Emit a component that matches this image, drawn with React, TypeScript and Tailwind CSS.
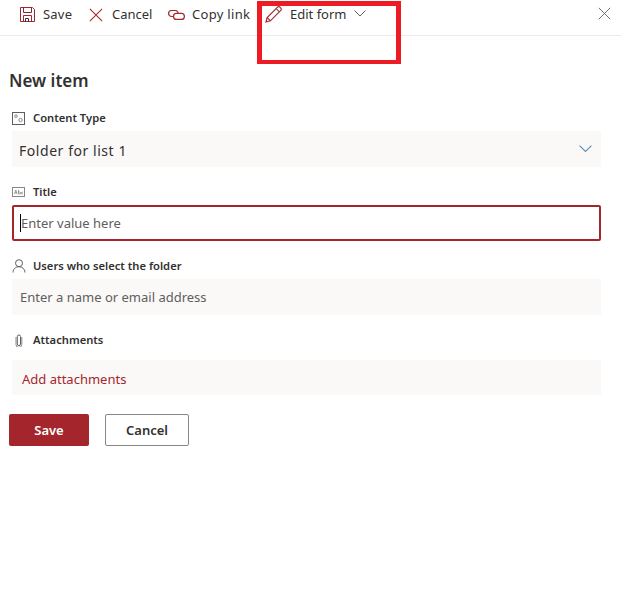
import React from "react";

const font = { fontFamily: '"Noto Sans", "Open Sans", sans-serif' };

function SaveIcon() {
  return (
    <svg width="15" height="15" viewBox="0 0 15 15" fill="none" stroke="#a4262c" strokeWidth="1">
      <path d="M0.5 0.5h12l2 2v12h-14z" />
      <path d="M3.5 0.5v5h8v-5" stroke="#7a2a3a" />
      <path d="M3.5 14.5v-6h8v6" stroke="#a4262c" />
      <path d="M5.5 14.5v-3h3v3" stroke="#323130" />
    </svg>
  );
}

function XIcon({ color, size, weight }: { color: string; size: number; weight: number }) {
  return (
    <svg width={size} height={size} viewBox="0 0 16 16" fill="none" stroke={color} strokeWidth={weight}>
      <path d="M1 1l14 14M15 1L1 15" />
    </svg>
  );
}

function LinkIcon() {
  return (
    <svg width="17" height="10" viewBox="0 0 17 10" fill="none" strokeWidth="1.2">
      <path d="M5.5 6.5H3.6a3 3 0 0 1 0-6h3.6a3 3 0 0 1 3 3" stroke="#a4262c" />
      <path d="M5.5 6.4a3 3 0 0 1 3-3h4.9a3 3 0 0 1 0 6H8.5a3 3 0 0 1-3-3z" stroke="#a4262c" />
    </svg>
  );
}

function PencilIcon() {
  return (
    <svg width="17" height="17" viewBox="0 0 17 17" fill="none" stroke="#a4262c" strokeWidth="1.2">
      <path d="M1 16l1.2-4.4L12.6 1.2a1.6 1.6 0 0 1 2.3 0l.9.9a1.6 1.6 0 0 1 0 2.3L5.4 14.8z" />
      <path d="M2.2 11.6l3.2 3.2" />
      <path d="M11.2 2.6l3.2 3.2" stroke="#605e5c" />
    </svg>
  );
}

function Chevron({ color, w }: { color: string; w: number }) {
  return (
    <svg width={w} height={w * 0.55} viewBox="0 0 12 6.6" fill="none" stroke={color} strokeWidth="1">
      <path d="M0.5 0.5l5.5 5.5 5.5-5.5" />
    </svg>
  );
}

function ToolItem({ icon, label, width, slot, extra }: { icon: React.ReactNode; label: string; width: string; slot: string; extra?: string }) {
  return (
    <div className={`flex shrink-0 items-center ${width}`}>
      <span className={`flex shrink-0 items-center ${slot}`}>{icon}</span>
      <span className={`text-[13px] leading-none text-[#323130] ${extra ?? ""}`}>{label}</span>
    </div>
  );
}

function Label({ icon, text }: { icon: React.ReactNode; text: string }) {
  return (
    <div className="flex h-[18px] items-center pl-[12px]">
      <span className="flex w-[21px] shrink-0 items-center">{icon}</span>
      <span className="text-[11.2px] font-semibold leading-none text-[#323130]">{text}</span>
    </div>
  );
}

export default function App() {
  return (
    <div style={font} className="relative h-[599px] w-[621px] overflow-hidden bg-white">
      <div className="flex h-[36px] items-center border-b border-[#edebe9] pb-[6px] pl-[20px] pr-[10px]">
        <ToolItem icon={<SaveIcon />} label="Save" width="w-[69px]" slot="w-[23px]" extra="tracking-[0.2px]" />
        <ToolItem icon={<XIcon color="#a4262c" size={14} weight={1.2} />} label="Cancel" width="w-[79px]" slot="w-[23px]" />
        <ToolItem icon={<LinkIcon />} label="Copy link" width="w-[97px]" slot="w-[24px]" extra="tracking-[0.3px]" />
        <ToolItem icon={<PencilIcon />} label="Edit form" width="w-[89px]" slot="w-[25px]" />
        <span className="flex -translate-y-[1px]">
          <Chevron color="#605e5c" w={12} />
        </span>
        <div className="ml-auto flex -translate-y-[1px]">
          <XIcon color="#605e5c" size={13} weight={1.1} />
        </div>
      </div>

      <h1 className="mt-[33px] h-[24px] pl-[9px] text-[17px] font-semibold leading-[24px] text-[#323130]">New item</h1>

      <div className="mt-[16px] pr-[20px]">
        <Label
          text="Content Type"
          icon={
            <svg width="13" height="13" viewBox="0 0 13 13" fill="none" stroke="#605e5c" strokeWidth="1">
              <rect x="0.5" y="0.5" width="12" height="12" />
              <circle cx="4" cy="4.2" r="1.3" stroke="#8a8886" />
              <circle cx="8.5" cy="8" r="1.7" stroke="#8a8886" />
            </svg>
          }
        />
        <div className="ml-[12px] mt-[4px] flex h-[36px] items-center justify-between bg-[#faf9f8] pl-[7px] pr-[9px]">
          <span className="translate-y-[1px] text-[14px] tracking-[0.55px] text-[#323130]">Folder for list 1</span>
          <Chevron color="#5a8bb5" w={13} />
        </div>

        <div className="mt-[16px]">
          <Label
            text="Title"
            icon={
              <svg width="13" height="10" viewBox="0 0 13 10" fill="none" stroke="#8a8886" strokeWidth="1">
                <rect x="0.5" y="0.5" width="12" height="9" />
                <path d="M2.5 7l1.3-4 1.3 4M3 5.8h1.6M6.5 3v4h1.2a1 1 0 0 0 0-2H6.5M11 5.2h-1a1 1 0 0 0 0 1.8h1" strokeWidth="0.6" stroke="#605e5c" />
              </svg>
            }
          />
        </div>
        <div className="ml-[12px] mt-[4px] flex h-[36px] items-center rounded-[2px] border-2 border-[#a4262c] bg-white pl-[6px]">
          <span className="h-[18px] w-px bg-black" />
          <span className="translate-y-[1px] text-[13px] text-[#605e5c]">Enter value here</span>
        </div>

        <div className="mt-[16px]">
          <Label
            text="Users who select the folder"
            icon={
              <svg width="14" height="14" viewBox="0 0 14 14" fill="none" stroke="#605e5c" strokeWidth="1">
                <circle cx="7" cy="4.2" r="3.5" />
                <path d="M1 13.5c0-3.2 2.4-5.8 6-5.8s6 2.6 6 5.8" />
              </svg>
            }
          />
        </div>
        <div className="ml-[12px] mt-[4px] flex h-[36px] items-center bg-[#faf9f8] pl-[8px]">
          <span className="translate-y-[1px] text-[13px] text-[#605e5c]">Enter a name or email address</span>
        </div>

        <div className="mt-[16px]">
          <Label
            text="Attachments"
            icon={
              <svg width="8" height="13" viewBox="0 0 8 13" fill="none" stroke="#605e5c" strokeWidth="1" className="ml-[3px]">
                <path d="M5.5 3v7a1.6 1.6 0 0 1-3.2 0V2.6a1.6 1.6 0 0 1 3.2 0" />
                <path d="M1 3v7.5a2.8 2.8 0 0 0 5.8 0V3" stroke="#8a8886" />
              </svg>
            }
          />
        </div>
        <div className="ml-[12px] mt-[11px] flex h-[35px] items-center bg-[#faf9f8] pl-[10px]">
          <span className="translate-y-[2px] text-[13px] text-[#a4262c]">Add attachments</span>
        </div>
      </div>

      <div className="ml-[9px] mt-[19px] flex gap-[16px]">
        <button className="flex h-[32px] w-[80px] items-center justify-center rounded-[2px] bg-[#a4262c] pt-[2px] text-[13px] font-semibold text-white">
          Save
        </button>
        <button className="flex h-[32px] w-[84px] items-center justify-center rounded-[2px] border border-[#8a8886] bg-white pt-[2px] text-[13px] font-semibold text-[#323130]">
          Cancel
        </button>
      </div>

      <div className="absolute left-[257px] top-[1px] h-[63px] w-[144px] border-[5px] border-b-4 border-[#ed1c24]" />
    </div>
  );
}
